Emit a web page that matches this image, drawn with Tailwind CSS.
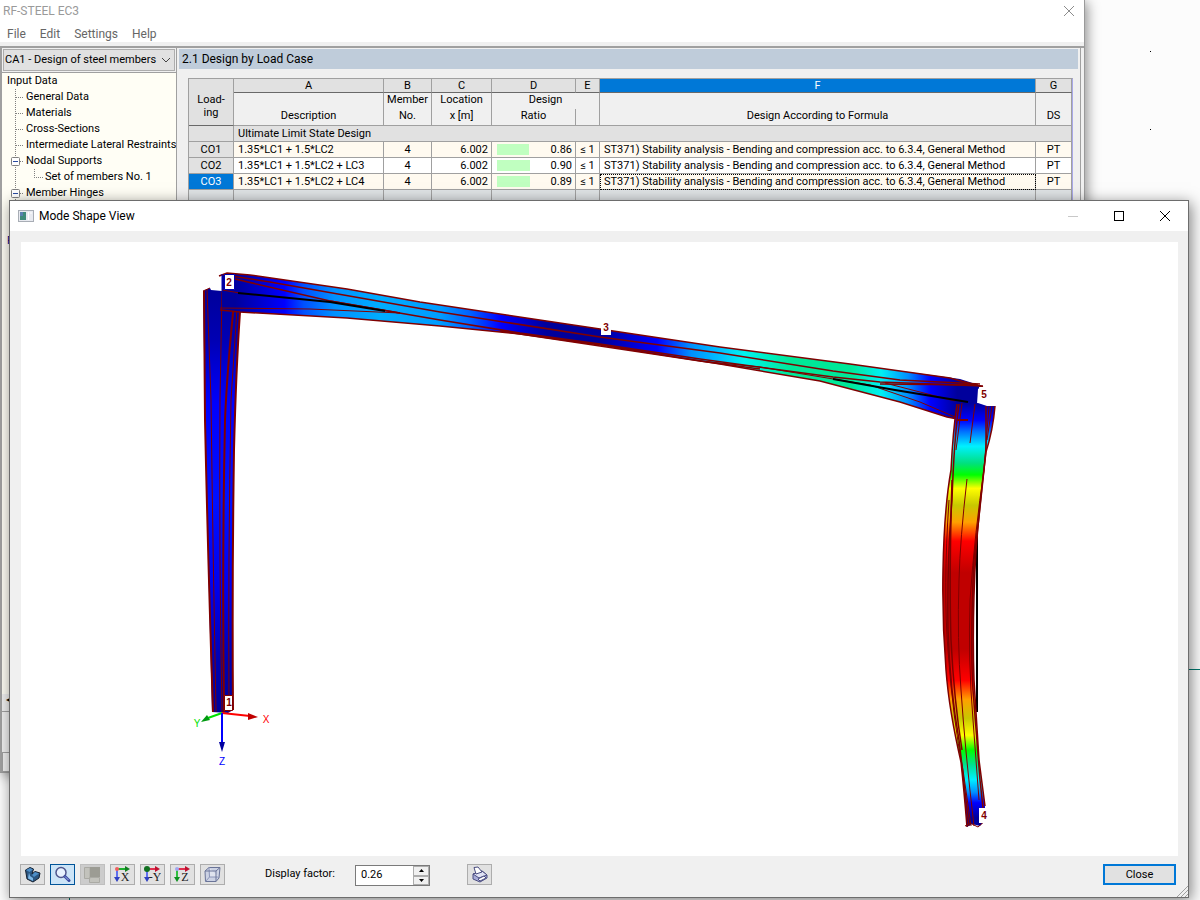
<!DOCTYPE html>
<html lang="en">
<head>
    <meta charset="UTF-8">
    <meta name="viewport" content="width=device-width, initial-scale=1.0">
    <title>RF-STEEL EC3</title>
    <script src="https://cdn.jsdelivr.net/npm/@tailwindcss/browser@4"></script>
</head>
<body class="bg-[#fcfcfc] text-black">
<div class="relative w-full h-screen overflow-hidden font-['Roboto',sans-serif]">

    <!-- Desktop marks -->
    <span class="absolute right-[49px] top-[51px] w-px h-px bg-black"></span>
    <span class="absolute right-[49px] top-[129px] w-px h-px bg-black"></span>
    <span class="absolute right-0 bottom-[230px] w-8 h-px bg-teal-700"></span>
    <span class="absolute left-[69px] bottom-0 w-px h-8 bg-teal-700"></span>

    <!-- Main window -->
    <div class="absolute left-0 top-0 right-[115px] bottom-[127px] flex flex-col bg-[#f0f0f0] border-r border-b border-[#9a9a9a] shadow-[2px_2px_12px_rgba(0,0,0,0.45)]">
        <header class="bg-white h-[42px] text-xs text-[#666666]">
            <div class="flex justify-between items-center h-[22px] pl-[3px] pr-[9px] text-[#9a9a9a]">
                <h1>RF-STEEL EC3</h1>
                <button aria-label="Close">
                    <svg class="w-3 h-3" viewBox="0 0 12 12" stroke="#8c8c8c" fill="none"><path d="M1 1L11 11M11 1L1 11"/></svg>
                </button>
            </div>
            <nav class="flex items-center gap-[14px] h-6 pl-[7px]">
                <a href="#">File</a>
                <a href="#">Edit</a>
                <a href="#">Settings</a>
                <a href="#">Help</a>
            </nav>
        </header>

        <div class="flex flex-1 min-h-0 mt-1 border-t-2 border-[#a0a0a0]">
            <!-- Navigator -->
            <aside class="flex flex-col w-[177px] shrink-0 border-l-2 border-r border-[#a0a0a0] text-[11px]">
                <div class="relative m-px mb-0 border border-[#adadad] bg-[#e1e1e1]">
                    <select aria-label="Design case" class="block w-[154px] h-5 appearance-none pl-px text-[11px] overflow-hidden whitespace-nowrap">
                        <option>CA1 - Design of steel members</option>
                    </select>
                    <svg class="absolute right-[3px] top-[6px] w-[10px] h-2 pointer-events-none" viewBox="0 0 10 8" fill="none" stroke="#444"><path d="M1 2L5 6L9 2"/></svg>
                </div>
                <ul class="relative flex-1 mt-px border-t border-[#a0a0a0] bg-[#fffef5] overflow-hidden whitespace-nowrap leading-4">
                    <li class="pl-[5px]">Input Data</li>
                    <li class="pl-6">General Data</li>
                    <li class="pl-6">Materials</li>
                    <li class="pl-6">Cross-Sections</li>
                    <li class="pl-6">Intermediate Lateral Restraints</li>
                    <li class="pl-6">Nodal Supports</li>
                    <li class="pl-[43px]">Set of members No. 1</li>
                    <li class="pl-6">Member Hinges</li>
                    <li class="pl-[43px]">&nbsp;</li>
                    <li class="pl-[43px]">&nbsp;</li>
                    <li class="pl-[5px] text-[#000080]">Parametric Input</li>
                    <!-- branch lines -->
                    <svg class="absolute left-0 top-0 w-12 h-[136px]" viewBox="0 0 48 136" fill="none" stroke="#808080">
                        <path stroke-dasharray="1 1" d="M13.500 16V136M14 24.500H22M14 40.500H22M14 56.500H22M14 72.500H22M14 88.500H22M32.500 96V104.500M32 104.500H42M14 120.500H22"/>
                        <rect x="9.500" y="84.500" width="8" height="8" rx="1" fill="#fff"/>
                        <rect x="9.500" y="116.500" width="8" height="8" rx="1" fill="#fff"/>
                        <path stroke="#2a4ba0" d="M11 88.500H16M11 120.500H16"/>
                    </svg>
                </ul>
                <div class="h-[18px] bg-[#f0f0f0] border-b border-[#a0a0a0] text-[8px] pl-1">◂</div>
                <div class="h-[60px] pt-10">
                    <button class="block w-20 h-5 border border-[#a0a0a0] bg-[#f0f0f0]" aria-label="Calculation"></button>
                </div>
            </aside>

            <!-- Results -->
            <main class="flex-1 min-w-0 ml-[2px] mr-[3px] pt-px pr-[2px] border-r border-[#a0a0a0]">
                <h2 class="h-5 leading-5 bg-[#bfccda] pl-[3px] text-xs">2.1 Design by Load Case</h2>
                <div class="mt-[9px] ml-[9px] mr-[5px] h-[600px] border-t border-l border-[#a0a0a0] border-r border-r-[#a8a8e8] text-[11px]">
                    <table class="w-full h-full table-fixed border-separate border-spacing-0 text-center whitespace-nowrap leading-[13px] [&_td]:border-r [&_td]:border-b [&_td]:border-[#a0a0a0] [&_td]:p-0 [&_th]:p-0 [&_th]:font-normal [&_th]:border-r [&_th]:border-[#a0a0a0]">
                        <colgroup>
                            <col class="w-[45px]"><col class="w-[150px]"><col class="w-12"><col class="w-[60px]"><col class="w-[84px]"><col class="w-6"><col><col class="w-9">
                        </colgroup>
                        <thead class="bg-[#f0f0f0]">
                            <tr class="h-[14px] bg-[#e1e1e1] [&>th]:border-b [&>th]:border-b-[#696969] [&>th]:leading-3">
                                <th rowspan="3" class="bg-[#e1e1e1] text-center"><div class="pt-2 leading-[13px]">Load-<br>ing</div></th>
                                <th>A</th>
                                <th>B</th>
                                <th>C</th>
                                <th>D</th>
                                <th>E</th>
                                <th class="bg-[#0078d7] text-white">F</th>
                                <th>G</th>
                            </tr>
                            <tr class="h-4 align-top">
                                <th></th>
                                <th>Member</th>
                                <th>Location</th>
                                <th colspan="2">Design</th>
                                <th></th>
                                <th></th>
                            </tr>
                            <tr class="h-[17px] align-top [&>th]:border-b">
                                <th>Description</th>
                                <th>No.</th>
                                <th>x [m]</th>
                                <th>Ratio</th>
                                <th></th>
                                <th>Design According to Formula</th>
                                <th>DS</th>
                            </tr>
                        </thead>
                        <tbody>
                            <tr class="h-4 bg-[#e1e1e1]">
                                <td></td>
                                <td colspan="7"><div class="text-left pl-1">Ultimate Limit State Design</div></td>
                            </tr>
                            <tr class="h-4 bg-[#fffaf0]">
                                <td class="bg-[#e1e1e1]">CO1</td>
                                <td><div class="text-left pl-1">1.35*LC1 + 1.5*LC2</div></td>
                                <td>4</td>
                                <td><div class="text-right pr-[3px]">6.002</div></td>
                                <td><div class="flex justify-between items-center pl-[5px] pr-[3px]"><span class="w-8 h-[11px] bg-[#c0ffc0]"></span>0.86</div></td>
                                <td>≤ 1</td>
                                <td><div class="text-left pl-1">ST371) Stability analysis - Bending and compression acc. to 6.3.4, General Method</div></td>
                                <td>PT</td>
                            </tr>
                            <tr class="h-4 bg-white">
                                <td class="bg-[#e1e1e1]">CO2</td>
                                <td><div class="text-left pl-1">1.35*LC1 + 1.5*LC2 + LC3</div></td>
                                <td>4</td>
                                <td><div class="text-right pr-[3px]">6.002</div></td>
                                <td><div class="flex justify-between items-center pl-[5px] pr-[3px]"><span class="w-[33px] h-[11px] bg-[#c0ffc0]"></span>0.90</div></td>
                                <td>≤ 1</td>
                                <td><div class="text-left pl-1">ST371) Stability analysis - Bending and compression acc. to 6.3.4, General Method</div></td>
                                <td>PT</td>
                            </tr>
                            <tr class="h-4 bg-[#fffaf0]">
                                <td class="bg-[#0078d7] text-white">CO3</td>
                                <td><div class="text-left pl-1">1.35*LC1 + 1.5*LC2 + LC4</div></td>
                                <td>4</td>
                                <td><div class="text-right pr-[3px]">6.002</div></td>
                                <td><div class="flex justify-between items-center pl-[5px] pr-[3px]"><span class="w-[33px] h-[11px] bg-[#c0ffc0]"></span>0.89</div></td>
                                <td>≤ 1</td>
                                <td class="outline outline-dotted outline-black -outline-offset-1"><div class="text-left pl-1">ST371) Stability analysis - Bending and compression acc. to 6.3.4, General Method</div></td>
                                <td>PT</td>
                            </tr>
                            <tr class="bg-[#dfe3e5]">
                                <td></td><td></td><td></td><td></td><td></td><td></td><td></td><td></td>
                            </tr>
                        </tbody>
                    </table>
                </div>
            </main>
        </div>
    </div>

    <!-- Mode shape dialog -->
    <section class="absolute left-[9px] right-[11px] top-[200px] bottom-[2px] flex flex-col bg-[#f0f0f0] border border-[#6d6d6d] shadow-[2px_3px_14px_rgba(0,0,0,0.5)]">
        <div class="flex items-center h-[30px] shrink-0 bg-white pl-2 pr-[17px] text-xs">
            <svg class="w-4 h-3 mr-[5px]" viewBox="0 0 16 12">
                <rect x="0.500" y="0.500" width="15" height="11" fill="#e8eaf0" stroke="#a8adb5"/>
                <rect x="2" y="2" width="6" height="8" fill="#3f8a7a"/>
                <rect x="2" y="2" width="3" height="4" fill="#5a80b0"/>
                <path d="M10.500 2V10M12 3H14" stroke="#fff"/>
            </svg>
            <h2 class="flex-1">Mode Shape View</h2>
            <div class="flex items-center gap-[34px]">
                <button aria-label="Minimize" disabled><svg class="w-3 h-3" viewBox="0 0 12 12"><path d="M1 6.500H11" stroke="#c8c8c8"/></svg></button>
                <button aria-label="Maximize"><svg class="w-3 h-3" viewBox="0 0 12 12"><rect x="1.500" y="1.500" width="9" height="9" fill="none" stroke="#000"/></svg></button>
                <button aria-label="Close"><svg class="w-3 h-3" viewBox="0 0 12 12"><path d="M1 1L11 11M11 1L1 11" stroke="#000"/></svg></button>
            </div>
        </div>

        <!-- Model view -->
        <div class="flex-1 min-h-0 mt-[11px] ml-[11px] mr-[10px] bg-white">
            <svg class="w-full h-full" viewBox="21 242 1157 614" fill="none" font-family="Liberation Sans, sans-serif">
                <defs>
                    <linearGradient id="left-col" gradientUnits="userSpaceOnUse" x1="0" y1="290" x2="0" y2="712">
                        <stop offset="0" stop-color="#00009a"/><stop offset=".12" stop-color="#0000b4"/><stop offset=".27" stop-color="#0000ff"/>
                        <stop offset=".5" stop-color="#0010ff"/><stop offset=".7" stop-color="#0000f0"/><stop offset=".88" stop-color="#0000b0"/><stop offset="1" stop-color="#00009a"/>
                    </linearGradient>
                    <linearGradient id="beam" gradientUnits="userSpaceOnUse" x1="220" y1="0" x2="980" y2="0">
                        <stop offset=".02" stop-color="#00009c"/><stop offset=".05" stop-color="#0000c8"/><stop offset=".085" stop-color="#0000ff"/>
                        <stop offset=".11" stop-color="#0050ff"/><stop offset=".15" stop-color="#0090ff"/><stop offset=".21" stop-color="#00acff"/>
                        <stop offset=".29" stop-color="#009cff"/><stop offset=".33" stop-color="#0060ff"/><stop offset=".37" stop-color="#0000ff"/>
                        <stop offset=".43" stop-color="#00009c"/><stop offset=".5" stop-color="#00009a"/><stop offset=".575" stop-color="#0000ff"/>
                        <stop offset=".62" stop-color="#0090ff"/><stop offset=".66" stop-color="#00c4ff"/><stop offset=".69" stop-color="#00f4f0"/>
                        <stop offset=".75" stop-color="#00e898"/><stop offset=".83" stop-color="#00e898"/><stop offset=".87" stop-color="#00f0f4"/>
                        <stop offset=".905" stop-color="#0090ff"/><stop offset=".935" stop-color="#0000ff"/><stop offset=".97" stop-color="#00009c"/>
                    </linearGradient>
                    <linearGradient id="right-col" gradientUnits="userSpaceOnUse" x1="0" y1="404" x2="0" y2="826">
                        <stop offset="0" stop-color="#0000a0"/><stop offset=".038" stop-color="#0000ff"/><stop offset=".065" stop-color="#0070ff"/>
                        <stop offset=".1" stop-color="#00f0ff"/><stop offset=".14" stop-color="#00e080"/><stop offset=".168" stop-color="#00ff00"/>
                        <stop offset=".2" stop-color="#ffff00"/><stop offset=".24" stop-color="#c8c800"/><stop offset=".28" stop-color="#ffa000"/>
                        <stop offset=".325" stop-color="#ff0000"/><stop offset=".4" stop-color="#c00000"/><stop offset=".58" stop-color="#c00000"/>
                        <stop offset=".655" stop-color="#ff0000"/><stop offset=".7" stop-color="#ffa000"/><stop offset=".745" stop-color="#c8c800"/>
                        <stop offset=".785" stop-color="#ffff00"/><stop offset=".82" stop-color="#00ff00"/><stop offset=".855" stop-color="#00e090"/>
                        <stop offset=".89" stop-color="#00f0ff"/><stop offset=".92" stop-color="#0090ff"/><stop offset=".945" stop-color="#0000ff"/><stop offset=".98" stop-color="#00009c"/>
                    </linearGradient>
                </defs>

                <!-- left column -->
                <path fill="url(#left-col)" d="M203 291L210 288L211 290L222 291L240 293V312Q236 370 234 450Q232 580 233 710L228 713L212 712Q208 560 205 420Z"/>
                <g stroke="#800000">
                    <path stroke-width="2" d="M204 291L205 420Q208 560 213 712M240 312Q236 370 234 450Q232 580 233 710M235 293Q227 370 225 420Q222 560 224 712"/>
                    <path d="M207 289L211 400Q213 560 216 712M222 291L220 400Q219 560 222 712M238 293L231 400Q228 560 229 712M203 291L210 288"/>
                </g>

                <!-- beam -->
                <path fill="url(#beam)" d="M222 275L227 273L250 275L347 289L420 302L600 329L720 347L850 364L960 379L982 386L978 389L977 404L968 421L947 417L900 402L820 381L720 364L600 345L520 334L440 326L347 318L240 312L222 310Z"/>
                <g stroke="#800000" stroke-width="1.500">
                    <path d="M219 276L227 273L250 275L347 289L420 302L600 329L720 347L850 364L950 378L983 387"/>
                    <path d="M220 310L240 312L347 318L440 326L520 334L600 345L720 364L820 381L900 402L947 417L968 421"/>
                    <path d="M225 275L270 282L440 312L600 337L720 353L833 371L900 380L980 384"/>
                    <path d="M235 279L330 301L440 320L520 333L600 344L700 359L833 377L880 382L983 386"/>
                    <path d="M330 301L400 313M500 331L600 346L700 361L760 369M880 384L978 385"/>
                </g>
                <g stroke="#800000">
                    <path d="M222 290L240 293M220 308L310 309L400 313M700 361L760 367L870 385L920 402L955 417M885 383L955 401"/>
                </g>
                <g stroke="#000" stroke-width="2">
                    <path d="M238 293L330 302L385 311M833 379L895 390L968 402"/>
                </g>
                <path stroke="#0000b0" d="M222 274V292"/>

                <!-- right column -->
                <path stroke="#000" stroke-width="2" d="M977 530V712"/>
                <path fill="url(#right-col)" d="M957 404L978 403L987 406H995Q993 430 986 452Q980 500 976 550Q972 620 974 680Q977 730 979 760L985 806V820L980 826L972 824L967 827Q964 790 961 762Q949 710 946 670Q942 620 943 570Q944 510 951 470Q953 430 957 404Z"/>
                <g stroke="#800000" stroke-width="1.500">
                    <path d="M957 404Q953 430 951 470Q944 510 943 570Q942 620 946 670Q949 710 961 762Q964 790 967 827"/>
                    <path d="M995 406Q993 430 986 452Q980 500 976 550Q972 620 974 680Q977 730 979 760L985 806"/>
                    <path d="M959 404Q954 440 952 500Q947 560 948 630Q950 690 959 740L969 826M986 406L986 450Q980 510 974 560Q970 640 973 690L980 780L983 808"/>
                    <path d="M952 480Q949 580 951 640Q954 700 962 750"/>
                </g>
                <g stroke="#800000">
                    <path d="M962 403L956 450M975 404L970 443M967 479Q960 540 959 580Q957 640 961 690Q965 750 974 826M989 406L984 470Q975 530 970 600Q968 660 973 720L979 800M949 500Q943 590 948 650Q953 720 963 770L971 826M992 406L987 440M965 826L970 823L978 827L986 820"/>
                    <path stroke-width="2" d="M957 420H968"/>
                </g>

                <!-- coordinate axes -->
                <g stroke-width="2">
                    <path stroke="#00e000" d="M222 713L208 718"/><path fill="#009a10" d="M201 722L207 715L210 720Z"/>
                    <path stroke="#ff0000" d="M222 713L250 716"/><path fill="#c00000" d="M258 717L248 720V713Z"/>
                    <path stroke="#0000ff" d="M222 713V744"/><path fill="#0000a0" d="M222 752L219 742H225Z"/>
                </g>
                <g font-size="10" text-anchor="middle">
                    <text x="197" y="727" fill="#00e000">Y</text>
                    <text x="266" y="723" fill="#ff0000">X</text>
                    <text x="222" y="765" fill="#0000ff">Z</text>
                </g>

                <!-- node and member labels -->
                <g fill="#fff">
                    <path stroke="#0000b0" d="M224.500 274.500H234.500V289.500H224.500Z"/>
                    <rect x="601" y="322" width="10" height="13"/>
                    <rect x="979" y="387" width="10" height="15"/>
                    <rect x="979" y="808" width="10" height="15"/>
                    <path stroke="#800000" d="M224.500 695.500H232.500V710.500H224.500Z"/>
                </g>
                <g fill="#800000" font-size="10" font-weight="bold" text-anchor="middle">
                    <text x="229" y="286">2</text>
                    <text x="606" y="331">3</text>
                    <text x="984" y="398">5</text>
                    <text x="984" y="819">4</text>
                    <text x="229" y="706">1</text>
                </g>
            </svg>
        </div>

        <!-- Toolbar -->
        <div class="flex items-start h-[41px] shrink-0 pt-2 pl-[10px] pr-[12px] text-[11px]">
            <div class="flex gap-[5px]">
                <button class="w-[25px] h-[21px] border border-[#adadad] bg-[#e1e1e1] flex items-center justify-center" aria-label="Rendering">
                    <svg class="w-[17px] h-[17px]" viewBox="0 0 17 17" stroke="#152030" stroke-linejoin="round">
                        <path fill="#2a5580" d="M1.500 4L6 1.500L9.500 3L8 8L11 5.500L16 7L15 12L9 16L3 13Z"/>
                        <path fill="#4d8ec8" stroke="none" d="M2 4L6 2L9 3.500L5.500 6ZM8 9L11 6L15 7.500L10 11Z"/>
                        <path fill="#7db8e8" stroke="none" d="M5 6.500L6 10L9 12V15L4 12.500Z"/>
                    </svg>
                </button>
                <button class="w-[25px] h-[21px] border border-[#005499] bg-[#cce4f7] flex items-center justify-center" aria-label="Zoom">
                    <svg class="w-[17px] h-[17px]" viewBox="0 0 17 17" fill="none">
                        <circle cx="7" cy="6.500" r="5" fill="#e8f2ff" stroke="#50568c" stroke-width="1.500"/>
                        <path d="M11 10.500L15 14.500" stroke="#3a4aa0" stroke-width="3" stroke-linecap="round"/>
                        <path d="M11 10.500L14.500 14" stroke="#a0b4f0"/>
                    </svg>
                </button>
                <button class="w-[25px] h-[21px] border border-[#bfbfbf] bg-[#cccccc] flex items-center justify-center" aria-label="Layers" disabled>
                    <svg class="w-[17px] h-[17px]" viewBox="0 0 17 17">
                        <path fill="#c2c2bc" stroke="#aaaaa4" d="M0.500 1.500H6V12.500H0.500ZM5.500 11.500H15.500V16.500H5.500Z"/>
                        <rect x="6" y="1" width="10" height="10" fill="#9c9c94"/>
                    </svg>
                </button>
                <button class="w-[25px] h-[21px] border border-[#adadad] bg-[#e1e1e1] flex items-center justify-center" aria-label="View in X">
                    <svg class="w-[17px] h-[17px]" viewBox="0 0 17 17" stroke-width="2">
                        <path stroke="#20b030" d="M3 3H12"/><path fill="#108020" d="M11 0L16 3L11 6Z"/>
                        <path stroke="#6070f0" d="M3 3V12"/><path fill="#3040c0" d="M0 11H6L3 16Z"/>
                        <circle cx="3" cy="3" r="2" fill="#f06060"/>
                        <text x="11" y="15" font-family="Liberation Serif, serif" font-size="12" text-anchor="middle" fill="#222">X</text>
                    </svg>
                </button>
                <button class="w-[25px] h-[21px] border border-[#adadad] bg-[#e1e1e1] flex items-center justify-center" aria-label="View in -Y">
                    <svg class="w-[17px] h-[17px]" viewBox="0 0 17 17" stroke-width="2">
                        <path stroke="#e03050" d="M3 3H12"/><path fill="#c01030" d="M11 0L16 3L11 6Z"/>
                        <path stroke="#6070f0" d="M3 3V12"/><path fill="#3040c0" d="M0 11H6L3 16Z"/>
                        <circle cx="3" cy="3" r="3" fill="#107020"/>
                        <text x="11" y="15" font-family="Liberation Serif, serif" font-size="12" text-anchor="middle" fill="#222">-Y</text>
                    </svg>
                </button>
                <button class="w-[25px] h-[21px] border border-[#adadad] bg-[#e1e1e1] flex items-center justify-center" aria-label="View in Z">
                    <svg class="w-[17px] h-[17px]" viewBox="0 0 17 17" stroke-width="2">
                        <path stroke="#e03050" d="M3 3H12"/><path fill="#c01030" d="M11 0L16 3L11 6Z"/>
                        <path stroke="#30c040" d="M3 3V12"/><path fill="#109020" d="M0 11H6L3 16Z"/>
                        <circle cx="3" cy="3" r="2" fill="#a0a8f0"/>
                        <text x="11" y="15" font-family="Liberation Serif, serif" font-size="12" text-anchor="middle" fill="#222">Z</text>
                    </svg>
                </button>
                <button class="w-[25px] h-[21px] border border-[#adadad] bg-[#e1e1e1] flex items-center justify-center" aria-label="Isometric view">
                    <svg class="w-[17px] h-[17px]" viewBox="0 0 17 17" fill="none" stroke="#6a7498" stroke-linejoin="round">
                        <path fill="#ccd2e4" d="M1 5L5 1.500H16L15 12L12 15.500H1.500Z"/>
                        <path fill="#dfe3ee" stroke="#8a94b8" d="M5 1.500L5.500 11H15M5.500 11L1.500 15.500"/>
                        <path d="M1 5H12V15.500M12 5L16 1.500"/>
                    </svg>
                </button>
            </div>

            <label for="display-factor" class="ml-10 pt-[3px] leading-[13px] w-[90px]">Display factor:</label>
            <div class="flex w-[75px] h-[21px] mt-px border border-[#7a7a7a] bg-white">
                <input id="display-factor" type="text" value="0.26" class="w-[57px] pl-[5px] text-[11px]">
                <div class="flex flex-col w-4 bg-[#f0f0f0]">
                    <button class="flex-1 border border-[#adadad] flex items-center justify-center" aria-label="Increase"><svg class="w-[5px] h-[3px]" viewBox="0 0 5 3"><path d="M0 3L2.500 0L5 3Z"/></svg></button>
                    <button class="flex-1 border border-[#adadad] flex items-center justify-center" aria-label="Decrease"><svg class="w-[5px] h-[3px]" viewBox="0 0 5 3"><path d="M0 0L2.500 3L5 0Z"/></svg></button>
                </div>
            </div>

            <button class="ml-[37px] w-[25px] h-[21px] border border-[#adadad] bg-[#e1e1e1] flex items-center justify-center" aria-label="Print">
                <svg class="w-[17px] h-[17px]" viewBox="0 0 17 17" stroke="#4a4c80" stroke-linejoin="round">
                    <path fill="#a8acd8" d="M2 8L11 5L16 9V12L9 16L2 13Z"/>
                    <path fill="#e0e2f4" d="M2 8L11 5L16 9L8 12Z"/>
                    <path fill="#fff" d="M3 1.500L7 1L11 6L5 8Z"/>
                    <path fill="#fff" d="M7 13L13 10L15 12L9 15Z"/>
                </svg>
            </button>
            <button class="ml-auto w-[73px] h-[21px] border-2 border-[#0078d7] bg-[#e1e1e1] leading-none">Close</button>
        </div>
        <svg class="absolute right-0 bottom-0 w-[11px] h-[11px]" viewBox="0 0 11 11" stroke="#a0a0a0"><path d="M0 11L11 0M4 11L11 4M8 11L11 8"/></svg>
    </section>
</div>
</body>
</html>
